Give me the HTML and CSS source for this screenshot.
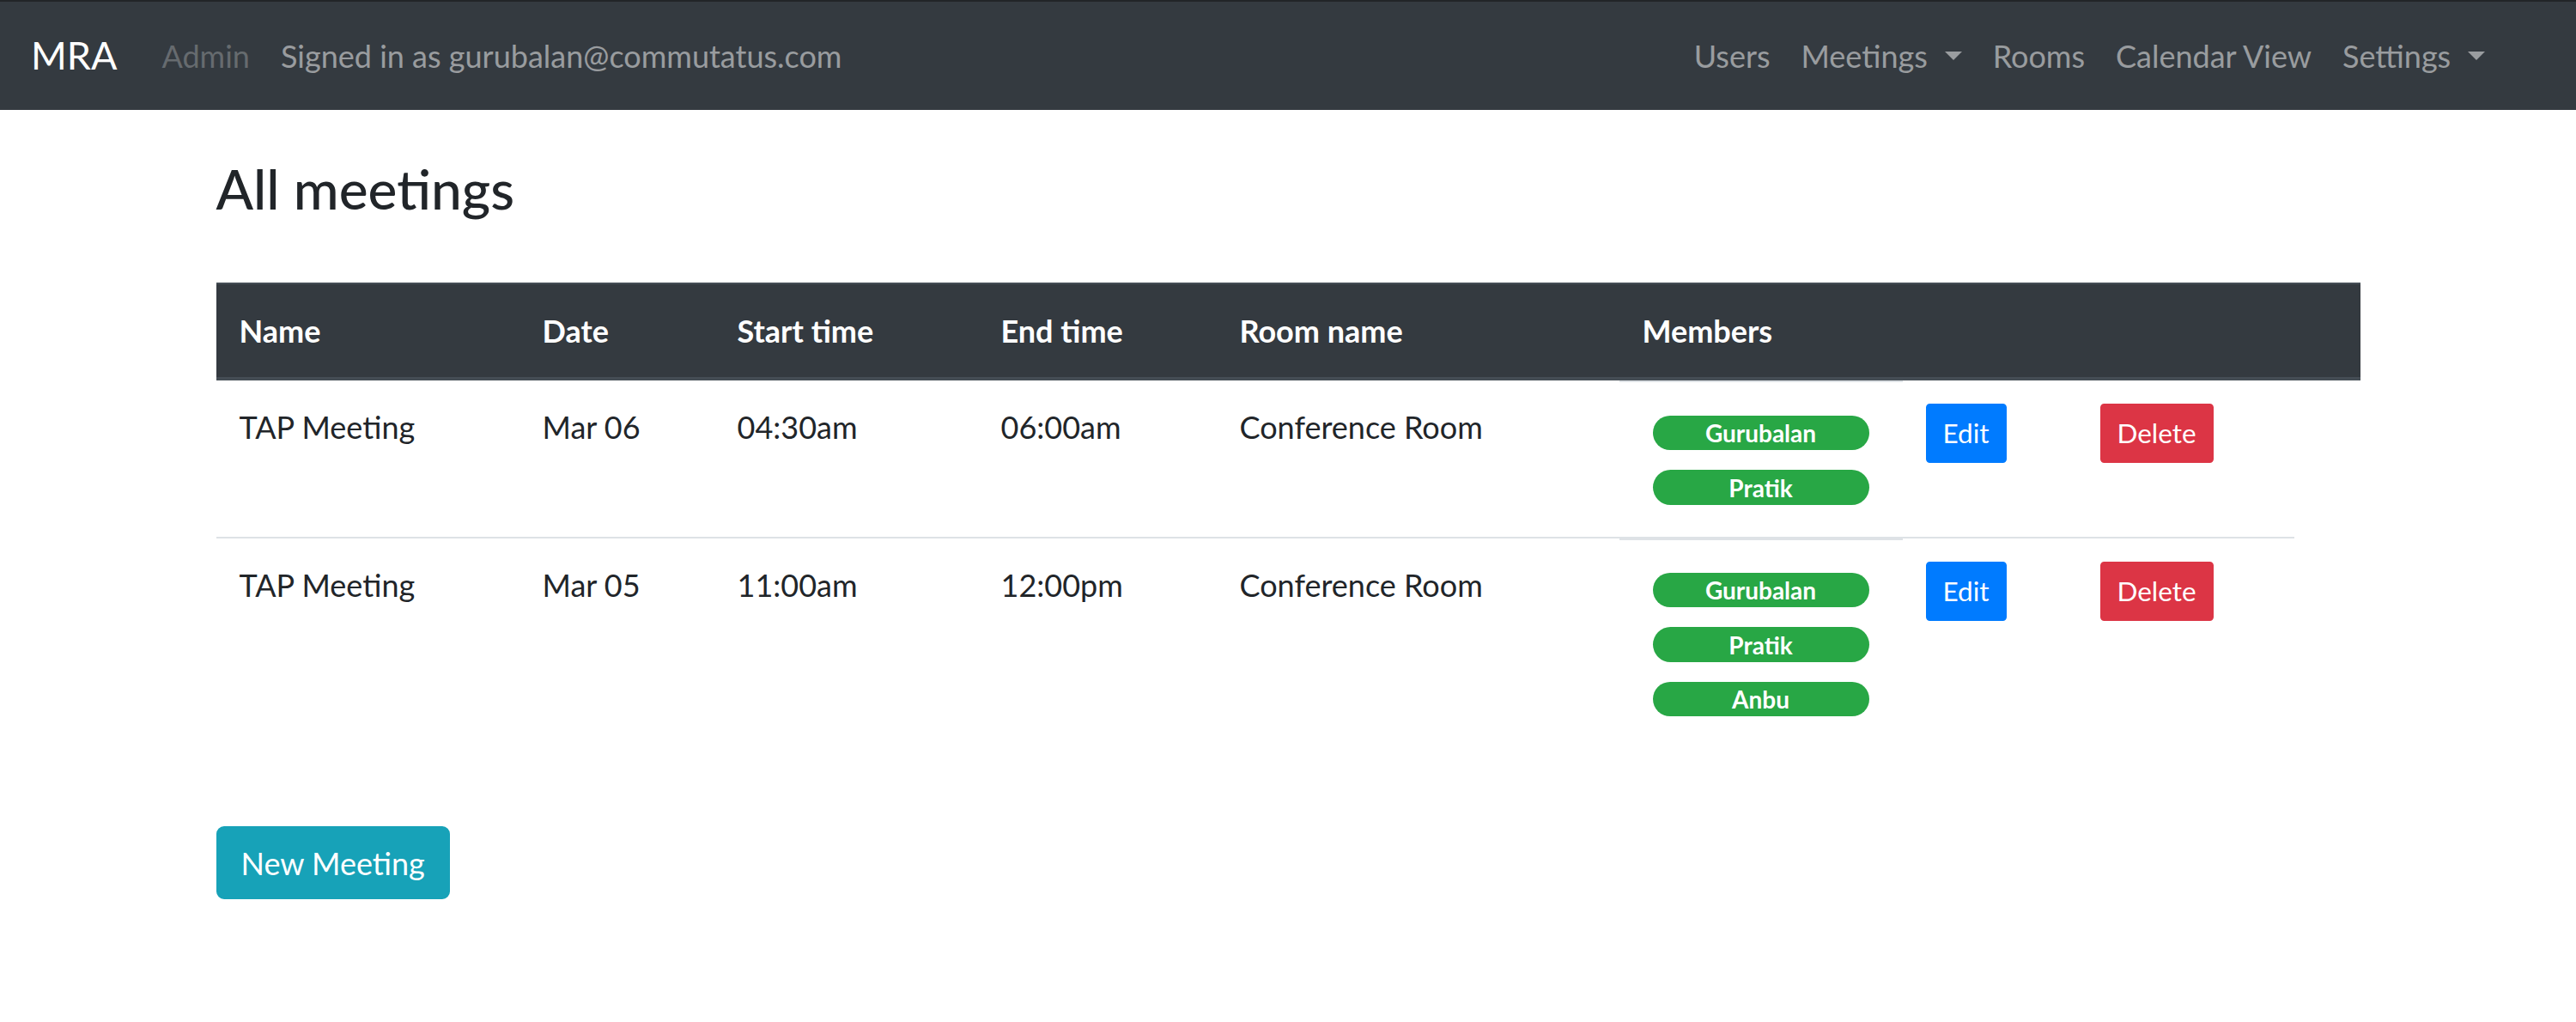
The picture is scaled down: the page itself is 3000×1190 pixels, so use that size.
FILE: index.html
```html
<!DOCTYPE html>
<html lang="en">
<head>
<meta charset="utf-8">
<title>MRA - All meetings</title>
<link rel="stylesheet" href="styles.css">
</head>
<body>
<nav class="navbar">
  <a class="brand" href="#">MRA</a>
  <ul class="nav">
    <li><a class="nav-link disabled" href="#">Admin</a></li>
    <li><span class="nav-link">Signed in as gurubalan@commutatus.com</span></li>
  </ul>
  <ul class="nav nav-right">
    <li><a class="nav-link" href="#">Users</a></li>
    <li><a class="nav-link caret" href="#">Meetings</a></li>
    <li><a class="nav-link" href="#">Rooms</a></li>
    <li><a class="nav-link" href="#">Calendar View</a></li>
    <li><a class="nav-link caret" href="#">Settings</a></li>
  </ul>
</nav>

<main class="container">
  <h2 class="title">All meetings</h2>
  <table class="meetings">
    <thead>
      <tr>
        <th class="col-name">Name</th>
        <th class="col-date">Date</th>
        <th class="col-start">Start time</th>
        <th class="col-end">End time</th>
        <th class="col-room">Room name</th>
        <th class="col-members">Members</th>
        <th class="col-edit"></th>
        <th class="col-delete"></th>
        <th class="col-extra"></th>
      </tr>
    </thead>
    <tbody>
      <tr>
        <td>TAP Meeting</td>
        <td>Mar 06</td>
        <td>04:30am</td>
        <td>06:00am</td>
        <td>Conference Room</td>
        <td class="members-cell">
          <div class="members">
            <span class="badge">Gurubalan</span>
            <span class="badge">Pratik</span>
          </div>
        </td>
        <td><a class="btn btn-sm btn-primary" href="#">Edit</a></td>
        <td><a class="btn btn-sm btn-danger" href="#">Delete</a></td>
      </tr>
      <tr>
        <td>TAP Meeting</td>
        <td>Mar 05</td>
        <td>11:00am</td>
        <td>12:00pm</td>
        <td>Conference Room</td>
        <td class="members-cell">
          <div class="members">
            <span class="badge">Gurubalan</span>
            <span class="badge">Pratik</span>
            <span class="badge">Anbu</span>
          </div>
        </td>
        <td><a class="btn btn-sm btn-primary" href="#">Edit</a></td>
        <td><a class="btn btn-sm btn-danger" href="#">Delete</a></td>
      </tr>
    </tbody>
  </table>
  <a class="btn btn-info" href="#">New Meeting</a>
</main>
</body>
</html>
```
FILE: styles.css
```css
* { box-sizing: border-box; }

html, body {
  margin: 0;
  padding: 0;
  background: #fff;
}

body {
  font-family: "Lato", "Noto Sans", "Liberation Sans", sans-serif;
  font-size: 36px;
  line-height: 1.5;
  color: #212529;
}

a { text-decoration: none; }

/* ---------- navbar ---------- */
.navbar {
  display: flex;
  align-items: center;
  height: 128px;
  padding: 0 88px 0 36px;
  background: #343a40;
  border-top: 2px solid #222528;
}

.brand {
  color: #fff;
  font-size: 45px;
  line-height: 1.5;
  margin-right: 34px;
}

.nav {
  display: flex;
  align-items: center;
  list-style: none;
  margin: 0;
  padding: 0;
}

.nav-right { margin-left: auto; }

.nav-link {
  display: block;
  padding: 0 18px;
  color: rgba(255, 255, 255, 0.5);
  white-space: nowrap;
}

.nav-link.disabled { color: rgba(255, 255, 255, 0.25); }

.caret::after {
  content: "";
  display: inline-block;
  margin-left: 0.55em;
  vertical-align: 0.255em;
  border-top: 0.3em solid;
  border-right: 0.3em solid transparent;
  border-left: 0.3em solid transparent;
}

/* ---------- content ---------- */
.container {
  max-width: 2497px;
  margin: 0 auto;
}

.title {
  font-size: 64px;
  font-weight: 500;
  line-height: 1.2;
  margin: 54px 0 70px;
}

.meetings {
  width: 100%;
  table-layout: fixed;
  border-collapse: separate;
  border-spacing: 0;
  margin-bottom: 91px;
}

.meetings th {
  background: #343a40;
  color: #fff;
  font-weight: 700;
  text-align: left;
  padding: 27px;
  border-top: 2px solid #454d55;
  border-bottom: 4px solid #454d55;
  white-space: nowrap;
}

.col-name { width: 353px; }
.col-date { width: 227px; }
.col-start { width: 307px; }
.col-end { width: 278px; }
.col-room { width: 469px; }
.col-members { width: 330px; }
.col-edit { width: 203px; }
.col-delete { width: 253px; }
.col-extra { width: 77px; }

.meetings td {
  padding: 27px;
  vertical-align: top;
  border-top: 2px solid #dee2e6;
  white-space: nowrap;
}

.meetings tbody tr:first-child td { border-top: 0; }

.meetings td.members-cell { padding: 0; }

.members {
  display: flex;
  flex-direction: column;
  gap: 23px;
  padding: 39px 39px 37px;
  border-top: 2px solid #dee2e6;
}

.meetings tbody tr + tr .members { padding-top: 38px; }

.badge {
  display: block;
  background: #28a745;
  color: #fff;
  font-size: 28px;
  font-weight: 700;
  line-height: 1;
  text-align: center;
  padding: 6.25px 16px;
  border-radius: 100px;
}

/* ---------- buttons ---------- */
.btn {
  display: inline-block;
  color: #fff;
  border: 2px solid transparent;
  font-size: 36px;
  line-height: 1.5;
  padding: 13.5px 27px;
  border-radius: 9px;
  vertical-align: middle;
}

.btn-sm {
  font-size: 31.5px;
  padding: 9px 18px;
  border-radius: 4.5px;
  vertical-align: top;
}

.btn-primary { background: #007bff; border-color: #007bff; }
.btn-danger { background: #dc3545; border-color: #dc3545; }
.btn-info { background: #17a2b8; border-color: #17a2b8; }
```
